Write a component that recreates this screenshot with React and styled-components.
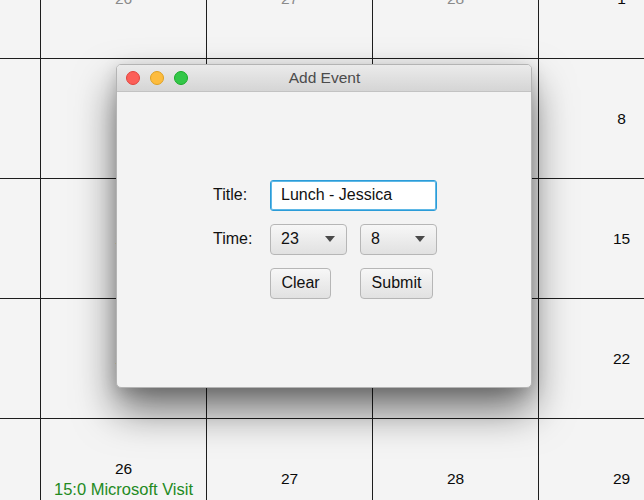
import React from "react";
import styled, { createGlobalStyle } from "styled-components";

const GlobalStyle = createGlobalStyle`
  html, body {
    margin: 0;
    padding: 0;
    background: #f4f4f4;
  }
  body {
    font-family: "Liberation Sans", Arial, sans-serif;
  }
`;

const weeks = [
  [{ d: 25, muted: true }, { d: 26, muted: true }, { d: 27, muted: true }, { d: 28, muted: true }, { d: 1 }],
  [{ d: 4 }, { d: 5 }, { d: 6 }, { d: 7 }, { d: 8 }],
  [{ d: 11 }, { d: 12 }, { d: 13 }, { d: 14 }, { d: 15 }],
  [{ d: 18 }, { d: 19 }, { d: 20 }, { d: 21 }, { d: 22 }],
  [{ d: 25 }, { d: 26, event: "15:0 Microsoft Visit" }, { d: 27 }, { d: 28 }, { d: 29 }],
];

function App() {
  return (
    <>
      <GlobalStyle />
      <Screen>
        <Calendar>
          {weeks.flat().map((day, i) => (
            <Cell key={i}>
              <DayNum $muted={day.muted}>{day.d}</DayNum>
              {day.event && <EventText>{day.event}</EventText>}
            </Cell>
          ))}
        </Calendar>

        <Dialog>
          <TitleBar>
            <Lights>
              <Light $color="#fc5f58" $edge="#e0443e" />
              <Light $color="#fdbc3e" $edge="#dea123" />
              <Light $color="#33c748" $edge="#1aab29" />
            </Lights>
            <WindowTitle>Add Event</WindowTitle>
          </TitleBar>
          <Body>
            <Form>
              <Label>Title:</Label>
              <TextInput defaultValue="Lunch - Jessica" />
              <Label>Time:</Label>
              <Combo>
                <span>23</span>
                <Arrow />
              </Combo>
              <Combo>
                <span>8</span>
                <Arrow />
              </Combo>
              <span />
              <Button $w="61px">Clear</Button>
              <Button $w="73px">Submit</Button>
            </Form>
          </Body>
        </Dialog>
      </Screen>
    </>
  );
}

const Screen = styled.div`
  position: relative;
  width: 644px;
  height: 500px;
  overflow: hidden;
  background: #f4f4f4;
`;

const Calendar = styled.div`
  display: grid;
  grid-template-columns: repeat(5, 166px);
  grid-template-rows: repeat(5, 120px);
  margin-left: -125px;
  margin-top: -61px;
  width: 830px;
`;

const Cell = styled.div`
  box-sizing: border-box;
  border-right: 1px solid #1e1e1e;
  border-bottom: 1px solid #1e1e1e;
  display: flex;
  flex-direction: column;
  align-items: center;
  justify-content: center;
`;

const DayNum = styled.div`
  font-size: 15.5px;
  line-height: 20px;
  color: ${(p) => (p.$muted ? "#8a8a8a" : "#0a0a0a")};
`;

const EventText = styled.div`
  font-size: 16.5px;
  line-height: 20px;
  color: #238a1e;
`;

const Dialog = styled.div`
  position: absolute;
  left: 116px;
  top: 64px;
  width: 416px;
  height: 324px;
  box-sizing: border-box;
  border: 1px solid #b4b4b4;
  border-radius: 5px;
  background: #f3f3f3;
  overflow: hidden;
  display: flex;
  flex-direction: column;
  box-shadow: 0 22px 40px rgba(0, 0, 0, 0.55), 0 4px 16px rgba(0, 0, 0, 0.15);
`;

const TitleBar = styled.div`
  position: relative;
  height: 26px;
  flex: none;
  display: flex;
  align-items: center;
  justify-content: center;
  background: linear-gradient(#ebebeb, #d5d5d5);
  border-bottom: 1px solid #c2c2c2;
`;

const Lights = styled.div`
  position: absolute;
  left: 9px;
  top: 6px;
  display: flex;
  gap: 10px;
`;

const Light = styled.span`
  width: 14px;
  height: 14px;
  border-radius: 50%;
  box-sizing: border-box;
  background: ${(p) => p.$color};
  border: 0.5px solid ${(p) => p.$edge};
`;

const WindowTitle = styled.div`
  font-size: 15.5px;
  color: #4b4b4b;
  padding-left: 1px;
`;

const Body = styled.div`
  flex: 1;
  display: flex;
  align-items: center;
  justify-content: center;
  padding-bottom: 1px;
  padding-left: 2px;
`;

const Form = styled.div`
  display: grid;
  grid-template-columns: 44px 77px 77px;
  grid-auto-rows: 31px;
  column-gap: 13px;
  row-gap: 13px;
  align-items: center;
`;

const Label = styled.div`
  font-size: 16px;
  color: #111;
`;

const TextInput = styled.input`
  grid-column: span 2;
  box-sizing: border-box;
  width: 100%;
  height: 31px;
  padding: 0 10px;
  font-family: "Liberation Sans", Arial, sans-serif;
  font-size: 16px;
  color: #111;
  background: #fff;
  border: 1px solid #2b9cd8;
  border-radius: 3px;
  box-shadow: inset 0 0 0 1px #5fb8e6;
  outline: none;
`;

const Combo = styled.div`
  box-sizing: border-box;
  height: 31px;
  display: flex;
  align-items: center;
  justify-content: space-between;
  padding: 0 10px 0 10px;
  font-size: 16px;
  color: #111;
  border: 1px solid #b6b6b6;
  border-radius: 4px;
  background: linear-gradient(#f7f7f7, #e1e1e1);
`;

const Arrow = styled.span`
  width: 0;
  height: 0;
  border-left: 5px solid transparent;
  border-right: 5px solid transparent;
  border-top: 6px solid #4a4a4a;
  margin-right: 1px;
`;

const Button = styled.button`
  box-sizing: border-box;
  width: ${(p) => p.$w};
  height: 31px;
  padding: 0;
  font-family: "Liberation Sans", Arial, sans-serif;
  font-size: 16px;
  color: #111;
  border: 1px solid #b6b6b6;
  border-radius: 4px;
  background: linear-gradient(#f7f7f7, #e1e1e1);
`;

export default App;
